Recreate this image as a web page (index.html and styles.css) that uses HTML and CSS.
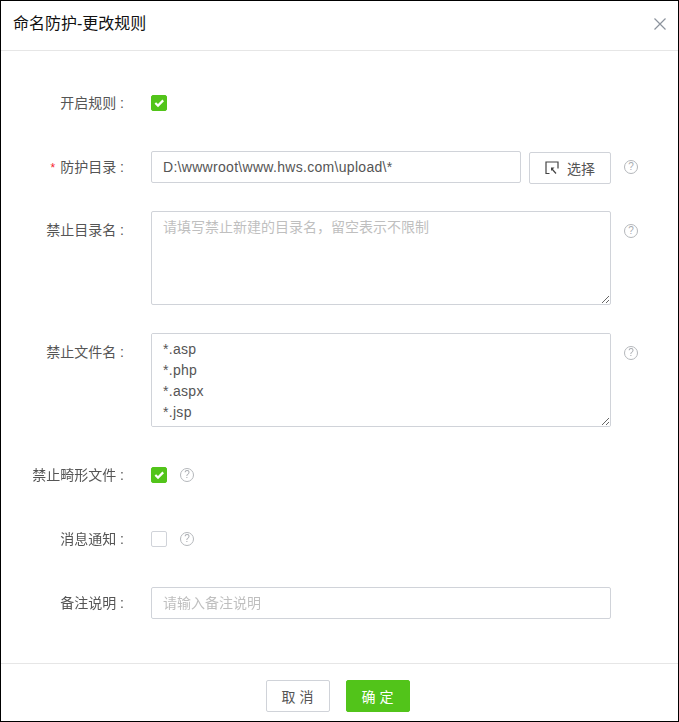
FILE: index.html
```html
<!DOCTYPE html>
<html lang="zh-CN">
<head>
    <meta charset="UTF-8">
    <meta name="viewport" content="width=device-width, initial-scale=1.0">
    <title>命名防护-更改规则</title>
    <link rel="stylesheet" href="styles.css">
</head>
<body>
    <div class="dialog">
        <div class="dialog-header">
            <span class="dialog-title">命名防护-更改规则</span>
            <svg class="close-icon" width="12" height="12" viewBox="0 0 12 12"><path d="M0.5 0.5L11.5 11.5M11.5 0.5L0.5 11.5" stroke="#8c939d" stroke-width="1.2" fill="none"/></svg>
        </div>

        <div class="dialog-body">
            <div class="form-row">
                <label class="form-label">开启规则 :</label>
                <span class="checkbox checked"><svg width="16" height="16" viewBox="0 0 16 16"><path d="M4.3 8L7 10.6L12.2 5.4" stroke="#fff" stroke-width="2.2" fill="none"/></svg></span>
            </div>

            <div class="form-row row-tight">
                <label class="form-label"><span class="required">*</span>防护目录 :</label>
                <input type="text" class="text-input path-input" value="D:\wwwroot\www.hws.com\upload\*">
                <button class="select-btn">
                    <svg width="14" height="14" viewBox="0 0 14 14"><path d="M4.5 12.5H1V1H13V7.5M7 8L11 12.5" stroke="#444" stroke-width="1.2" fill="none"/><path d="M6 6.5H9.5L6 10Z" fill="#444"/></svg>
                    <span>选择</span>
                </button>
                <span class="help-icon">?</span>
            </div>

            <div class="form-row row-tight">
                <label class="form-label label-area">禁止目录名 :</label>
                <textarea class="text-area" placeholder="请填写禁止新建的目录名，留空表示不限制"></textarea>
                <span class="help-icon help-area">?</span>
            </div>

            <div class="form-row">
                <label class="form-label label-area">禁止文件名 :</label>
                <textarea class="text-area">*.asp
*.php
*.aspx
*.jsp</textarea>
                <span class="help-icon help-area">?</span>
            </div>

            <div class="form-row">
                <label class="form-label">禁止畸形文件 :</label>
                <span class="checkbox checked"><svg width="16" height="16" viewBox="0 0 16 16"><path d="M4.3 8L7 10.6L12.2 5.4" stroke="#fff" stroke-width="2.2" fill="none"/></svg></span>
                <span class="help-icon">?</span>
            </div>

            <div class="form-row">
                <label class="form-label">消息通知 :</label>
                <span class="checkbox"></span>
                <span class="help-icon">?</span>
            </div>

            <div class="form-row">
                <label class="form-label">备注说明 :</label>
                <input type="text" class="text-input note-input" placeholder="请输入备注说明">
            </div>
        </div>

        <div class="dialog-footer">
            <button class="btn">取 消</button>
            <button class="btn btn-primary">确 定</button>
        </div>
    </div>
</body>
</html>
```

FILE: styles.css
```css
* {
    box-sizing: border-box;
}
body {
    margin: 0;
    background: #fff;
    font-family: "Liberation Sans", "Noto Sans CJK SC", sans-serif;
    font-size: 14px;
    color: #555;
}
.dialog {
    width: 679px;
    height: 722px;
    border: 1px solid #000;
    display: flex;
    flex-direction: column;
    overflow: hidden;
}
.dialog-header {
    height: 50px;
    flex: none;
    padding: 0 12px 4px 12px;
    border-bottom: 1px solid #e6e6e6;
    display: flex;
    align-items: center;
    justify-content: space-between;
}
.dialog-title {
    font-size: 16px;
    line-height: 24px;
    color: #111;
}
.dialog-body {
    flex: 1;
    padding-top: 36px;
}
.form-row {
    display: flex;
    align-items: flex-start;
    margin-bottom: 32px;
    min-height: 32px;
}
.row-tight {
    margin-bottom: 28px;
}
.form-label {
    width: 123px;
    height: 32px;
    flex: none;
    margin-right: 27px;
    line-height: 32px;
    text-align: right;
    white-space: nowrap;
}
.label-area {
    line-height: 38px;
}
.required {
    color: #f5222d;
    margin-right: 5px;
    font-size: 12px;
}
.checkbox {
    width: 16px;
    height: 16px;
    margin-top: 8px;
    flex: none;
    display: block;
    border: 1px solid #d0d3d9;
    border-radius: 2px;
    background: #fff;
}
.checkbox svg {
    display: block;
    margin: -1px;
}
.checkbox.checked {
    background: #52c41a;
    border-color: #52c41a;
}
.text-input,
.text-area {
    font-family: inherit;
    font-size: 14px;
    letter-spacing: 0.3px;
    color: #555;
    border: 1px solid #d0d3d9;
    border-radius: 2px;
    outline: none;
    background: #fff;
}
.text-input {
    height: 32px;
    padding: 0 11px;
}
.path-input {
    width: 370px;
}
.note-input {
    width: 460px;
}
.text-area {
    width: 460px;
    height: 94px;
    padding: 5px 11px;
    line-height: 21px;
    display: block;
}
.text-input::placeholder,
.text-area::placeholder {
    color: #bfbfbf;
    letter-spacing: 0;
}
.select-btn {
    width: 82px;
    height: 32px;
    margin: 1px 0 -1px 8px;
    flex: none;
    display: flex;
    align-items: center;
    justify-content: center;
    gap: 8px;
    padding: 0;
    background: #fff;
    border: 1px solid #d0d3d9;
    border-radius: 2px;
    font-family: inherit;
    font-size: 14px;
    color: #555;
}
.help-icon {
    width: 14px;
    height: 14px;
    margin: 9px 0 0 13px;
    flex: none;
    border: 1.5px solid #b4b7bb;
    border-radius: 50%;
    font-size: 10px;
    line-height: 11px;
    text-align: center;
    color: #a8abb0;
}
.help-area {
    margin-top: 13px;
}
.dialog-footer {
    height: 58px;
    flex: none;
    border-top: 1px solid #e6e6e6;
    display: flex;
    justify-content: center;
    gap: 16px;
    padding: 16px 4px 0 0;
}
.btn {
    width: 64px;
    height: 32px;
    padding: 0;
    background: #fff;
    border: 1px solid #d0d3d9;
    border-radius: 2px;
    font-family: inherit;
    font-size: 14px;
    color: #555;
}
.btn-primary {
    background: #52c41a;
    border-color: #52c41a;
    color: #fff;
}
```
